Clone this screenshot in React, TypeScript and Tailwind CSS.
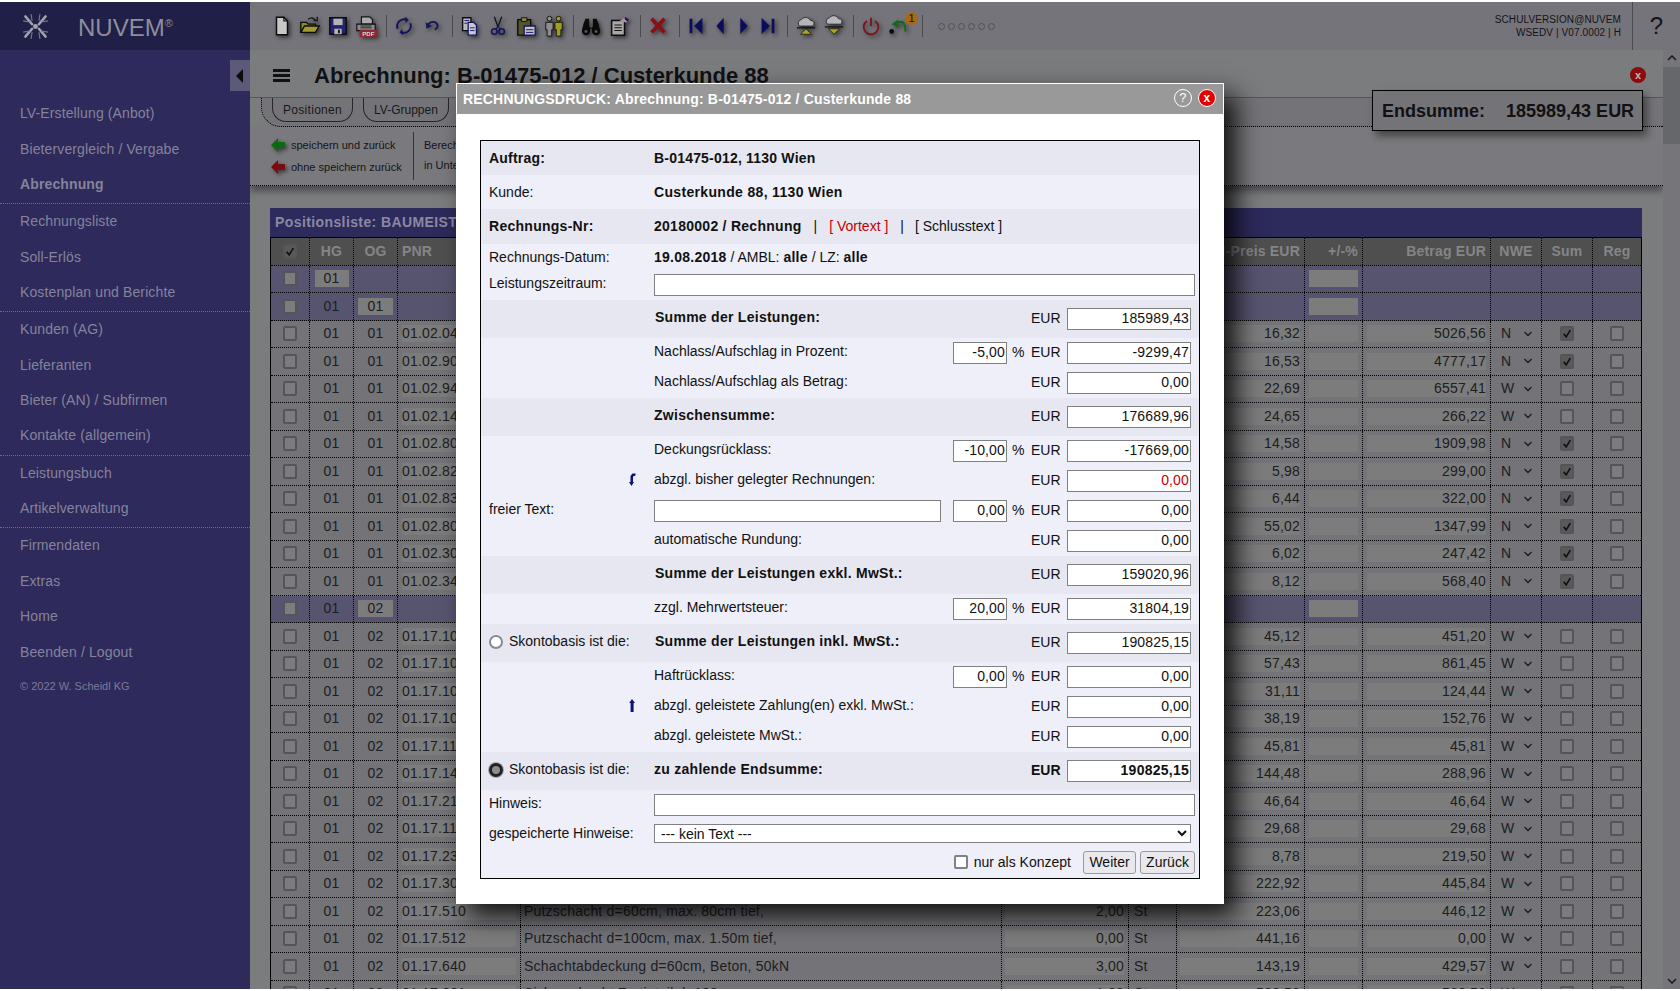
import { ReactNode } from 'react';

const FONT = "font-['Liberation_Sans',Arial,sans-serif]";
const GRID =
  'grid grid-cols-[39px_44px_44px_123px_481px_127px_48px_128px_58px_128px_51px_51px_48px]';
const SHADOW = 'drop-shadow-[2px_2px_2px_rgba(0,0,0,0.55)]';

const NAV = [
  { label: 'LV-Erstellung (Anbot)' },
  { label: 'Bietervergleich / Vergabe' },
  { label: 'Abrechnung', bold: true, line: true },
  { label: 'Rechnungsliste' },
  { label: 'Soll-Erlös' },
  { label: 'Kostenplan und Berichte', line: true },
  { label: 'Kunden (AG)' },
  { label: 'Lieferanten' },
  { label: 'Bieter (AN) / Subfirmen' },
  { label: 'Kontakte (allgemein)', line: true },
  { label: 'Leistungsbuch' },
  { label: 'Artikelverwaltung', line: true },
  { label: 'Firmendaten' },
  { label: 'Extras' },
  { label: 'Home' },
  { label: 'Beenden / Logout' },
];

type Row = {
  blue?: boolean;
  hg?: boolean;
  og?: string;
  ogField?: boolean;
  pnr?: string;
  text?: string;
  menge?: string;
  preis?: string;
  betrag?: string;
  nwe?: string;
  sum?: boolean;
};

const ROWS: Row[] = [
  { blue: true, hg: true },
  { blue: true, og: '01', ogField: true },
  { og: '01', pnr: '01.02.040', preis: '16,32', betrag: '5026,56', nwe: 'N', sum: true },
  { og: '01', pnr: '01.02.900', preis: '16,53', betrag: '4777,17', nwe: 'N', sum: true },
  { og: '01', pnr: '01.02.940', preis: '22,69', betrag: '6557,41', nwe: 'W' },
  { og: '01', pnr: '01.02.140', preis: '24,65', betrag: '266,22', nwe: 'W' },
  { og: '01', pnr: '01.02.800', preis: '14,58', betrag: '1909,98', nwe: 'N', sum: true },
  { og: '01', pnr: '01.02.820', preis: '5,98', betrag: '299,00', nwe: 'N', sum: true },
  { og: '01', pnr: '01.02.830', preis: '6,44', betrag: '322,00', nwe: 'N', sum: true },
  { og: '01', pnr: '01.02.800', preis: '55,02', betrag: '1347,99', nwe: 'N', sum: true },
  { og: '01', pnr: '01.02.300', preis: '6,02', betrag: '247,42', nwe: 'N', sum: true },
  { og: '01', pnr: '01.02.340', preis: '8,12', betrag: '568,40', nwe: 'N', sum: true },
  { blue: true, og: '02', ogField: true },
  { og: '02', pnr: '01.17.100', preis: '45,12', betrag: '451,20', nwe: 'W' },
  { og: '02', pnr: '01.17.100', preis: '57,43', betrag: '861,45', nwe: 'W' },
  { og: '02', pnr: '01.17.100', preis: '31,11', betrag: '124,44', nwe: 'W' },
  { og: '02', pnr: '01.17.100', preis: '38,19', betrag: '152,76', nwe: 'W' },
  { og: '02', pnr: '01.17.110', preis: '45,81', betrag: '45,81', nwe: 'W' },
  { og: '02', pnr: '01.17.140', preis: '144,48', betrag: '288,96', nwe: 'W' },
  { og: '02', pnr: '01.17.210', preis: '46,64', betrag: '46,64', nwe: 'W' },
  { og: '02', pnr: '01.17.110', preis: '29,68', betrag: '29,68', nwe: 'W' },
  { og: '02', pnr: '01.17.230', preis: '8,78', betrag: '219,50', nwe: 'W' },
  { og: '02', pnr: '01.17.300', preis: '222,92', betrag: '445,84', nwe: 'W' },
  { og: '02', pnr: '01.17.510', text: 'Putzschacht d=60cm, max. 80cm tief,', menge: '2,00', preis: '223,06', betrag: '446,12', nwe: 'W' },
  { og: '02', pnr: '01.17.512', text: 'Putzschacht d=100cm, max. 1.50m tief,', menge: '0,00', preis: '441,16', betrag: '0,00', nwe: 'W' },
  { og: '02', pnr: '01.17.640', text: 'Schachtabdeckung d=60cm, Beton, 50kN', menge: '3,00', preis: '143,19', betrag: '429,57', nwe: 'W' },
  { og: '02', pnr: '01.17.661', text: 'Sickerschacht Fertigteil d=100', menge: '1,00', preis: '566,56', betrag: '566,56', nwe: 'W' },
];

function Box({ checked, dark }: { checked?: boolean; dark?: boolean }) {
  return (
    <span
      className={`flex h-[15px] w-[14px] items-center justify-center rounded-[2px] border-2 border-[#555559] ${
        dark ? 'bg-[#5a5a5a]' : 'bg-[#7c7c7e]'
      }`}
    >
      {checked && (
        <svg viewBox="0 0 12 12" className="h-[11px] w-[11px]">
          <path d="M2 6.5l3 3.5 5-8" fill="none" stroke="#111" strokeWidth="2" />
        </svg>
      )}
    </span>
  );
}

function Cell({ children, className = '' }: { children?: ReactNode; className?: string }) {
  return (
    <div className={`flex items-center border-r border-dotted border-black last:border-r-0 ${className}`}>
      {children}
    </div>
  );
}

function Field({ children, className = '' }: { children?: ReactNode; className?: string }) {
  return <span className={`flex h-[17px] items-center bg-[#7c7c7c] ${className}`}>{children}</span>;
}

function TableRow({ row }: { row: Row }) {
  return (
    <div
      className={`${GRID} h-[27.5px] border-b border-dotted border-black text-[14px] tracking-[0.2px] text-[#1d1d22] ${
        row.blue ? 'bg-[#575470]' : 'bg-[#737378]'
      }`}
    >
      <Cell className="justify-center">
        <Box />
      </Cell>
      <Cell className="justify-center">
        {row.hg ? <Field className="w-[34px] justify-center">01</Field> : '01'}
      </Cell>
      <Cell className="justify-center">
        {row.ogField ? <Field className="w-[35px] justify-center">{row.og}</Field> : row.og}
      </Cell>
      <Cell className="pl-[4px]">
        {row.pnr && <Field className="w-[114px]">{row.pnr}</Field>}
      </Cell>
      <Cell className="pl-[3px]">{row.text}</Cell>
      <Cell className="justify-end pr-[4px]">
        {row.menge && <Field className="w-[119px] justify-end">{row.menge}</Field>}
      </Cell>
      <Cell className="pl-[5px]">{row.text && 'St'}</Cell>
      <Cell className="justify-end pr-[4px]">
        {row.preis && <Field className="w-[120px] justify-end">{row.preis}</Field>}
      </Cell>
      <Cell className="justify-center">
        <Field className="w-[49px]" />
      </Cell>
      <Cell className="justify-end pr-[4px]">
        {row.betrag && <Field className="w-[119px] justify-end">{row.betrag}</Field>}
      </Cell>
      <Cell className="pl-[10px]">
        {row.nwe && (
          <>
            <span className="w-[22px]">{row.nwe}</span>
            <svg viewBox="0 0 10 6" className="h-[6px] w-[10px]">
              <path d="M1.5 1l3.5 3.5L8.5 1" fill="none" stroke="#1d1d22" strokeWidth="1.4" />
            </svg>
          </>
        )}
      </Cell>
      <Cell className="justify-center">{!row.blue && <Box checked={row.sum} dark={row.sum} />}</Cell>
      <Cell className="justify-center">{!row.blue && <Box />}</Cell>
    </div>
  );
}

function ToolIcon({ children, w = 'w-7' }: { children: ReactNode; w?: string }) {
  return (
    <span className={`flex h-6 items-center justify-center ${w}`}>
      <svg viewBox="0 0 24 24" className={`h-[22px] w-[22px] ${SHADOW}`}>
        {children}
      </svg>
    </span>
  );
}

function Sep({ className = 'ml-[6px] mr-[3px]' }: { className?: string }) {
  return <span className={`h-[22px] w-px bg-[#4a4a4e] ${className}`} />;
}

function Toolbar() {
  return (
    <div className="flex items-center pl-[18px]">
      <ToolIcon>
        <path d="M6 2.5h8l4 4v15H6z" fill="#c8c8c8" stroke="#0c0c0c" strokeWidth="1.6" />
        <path d="M14 2.5v4h4" fill="none" stroke="#0c0c0c" strokeWidth="1.2" />
      </ToolIcon>
      <ToolIcon>
        <path d="M2 8h6l2 2h8v9H2z" fill="#8d8a2a" stroke="#0c0c0c" strokeWidth="1.5" />
        <path d="M2 19l4-7h16l-4 7z" fill="#a09c30" stroke="#0c0c0c" strokeWidth="1.5" />
        <path d="M10 5c3-3 6-2 8 1" fill="none" stroke="#1a1a1a" strokeWidth="1.5" />
        <path d="M16 6h4V2" fill="none" stroke="#1a1a1a" strokeWidth="1.4" />
      </ToolIcon>
      <ToolIcon>
        <path d="M3 3h18v18H3z" fill="#24246e" stroke="#0c0c0c" strokeWidth="1.5" />
        <path d="M7 4h10v7H7z" fill="#b4b4b8" />
        <path d="M8 15h8v6H8z" fill="#b4b4b8" />
        <path d="M12 16h2v4h-2z" fill="#111" />
      </ToolIcon>
      <ToolIcon>
        <path d="M7 2h9l3 3v5H7z" fill="#aaa" stroke="#111" strokeWidth="1.2" />
        <path d="M2 10h20v7H2z" fill="#8a8a8a" stroke="#111" strokeWidth="1.2" />
        <path d="M6 12h12M6 14h12" stroke="#222" strokeWidth="1" />
        <path d="M5 16h19v8H5z" fill="#8b2a36" />
        <text x="14.5" y="22.7" textAnchor="middle" fontSize="6.6" fontWeight="700" fill="#d8d8d8" fontFamily="Liberation Sans">
          PDF
        </text>
      </ToolIcon>
      <Sep />
      <ToolIcon>
        <path d="M5 15C3 9 8 3 15 5" fill="none" stroke="#14145e" strokeWidth="2.2" />
        <path d="M19 9c2 6-3 12-10 10" fill="none" stroke="#14145e" strokeWidth="2.2" />
        <path d="M13 2l4 3-3 4zM11 22l-4-3 3-4z" fill="#14145e" />
      </ToolIcon>
      <ToolIcon>
        <path d="M8 10c3-4 9-3 10 1 .5 2-1 4-3 5" fill="none" stroke="#14145e" strokeWidth="2" />
        <path d="M5 8l1 7 6-3z" fill="#14145e" />
      </ToolIcon>
      <Sep />
      <ToolIcon>
        <path d="M4 3h9v14H4z" fill="#b8b8c0" stroke="#0c0c0c" strokeWidth="1.4" />
        <path d="M10 8h6l3 3v11h-9z" fill="#c8c8d4" stroke="#14145e" strokeWidth="1.4" />
        <path d="M6 6h5M6 9h3M12 14h5M12 17h5" stroke="#14145e" strokeWidth="1" />
      </ToolIcon>
      <ToolIcon>
        <path d="M8 2l4 11M16 2l-4 11" stroke="#101020" strokeWidth="1.4" />
        <circle cx="8" cy="18" r="3" fill="none" stroke="#14145e" strokeWidth="1.8" />
        <circle cx="16" cy="18" r="3" fill="none" stroke="#14145e" strokeWidth="1.8" />
        <path d="M9.5 15.5l2.5-3 2.5 3" fill="none" stroke="#14145e" strokeWidth="1.2" />
      </ToolIcon>
      <ToolIcon>
        <path d="M3 5h14v17H3z" fill="#55552a" stroke="#0c0c0c" strokeWidth="1.5" />
        <path d="M7 3h6v4H7z" fill="#8a8a50" stroke="#0c0c0c" strokeWidth="1" />
        <path d="M10 12h12v10H10z" fill="#c0c0cc" stroke="#14145e" strokeWidth="1.4" />
        <path d="M12 16h8M12 19h8" stroke="#14145e" strokeWidth="1" />
      </ToolIcon>
      <ToolIcon>
        <circle cx="7" cy="4" r="2.6" fill="#8e8e90" stroke="#111" />
        <path d="M3 8h8v8H9.5v7h-5v-7H3z" fill="#8e8e90" stroke="#111" />
        <circle cx="17" cy="4" r="2.6" fill="#a09c20" stroke="#111" />
        <path d="M13 8h8v8h-1.5v7h-5v-7H13z" fill="#a09c20" stroke="#111" />
      </ToolIcon>
      <Sep className="ml-[5px] mr-[3px]" />
      <ToolIcon>
        <path d="M4 9l2-5h4v8l1 2h2l1-2V4h4l2 5 2 8a4.5 4.5 0 0 1-9 1v-3h-2v3a4.5 4.5 0 0 1-9-1z" fill="#0a0a0a" />
        <circle cx="6.5" cy="18" r="1.6" fill="#555" />
        <circle cx="17.5" cy="18" r="1.6" fill="#555" />
      </ToolIcon>
      <ToolIcon>
        <path d="M4 6h14v16H4z" fill="#a8a8a8" stroke="#0c0c0c" strokeWidth="1.6" />
        <path d="M7 11h8M7 14h8M7 17h8" stroke="#111" strokeWidth="1.1" />
        <path d="M11 8l5-4 4-2 3 3-3 3h-6z" fill="#b58a94" />
        <path d="M19 2l4 3-2 2-3-3z" fill="#14145e" />
      </ToolIcon>
      <Sep className="ml-[7px] mr-[3px]" />
      <ToolIcon>
        <path d="M5 4l14 15M19 4L5 19" stroke="#8a0f16" strokeWidth="4" />
      </ToolIcon>
      <Sep className="ml-[7px] mr-[4px]" />
      <ToolIcon w="w-6">
        <path d="M5 4h3v16H5zM19 3v18L10 12z" fill="#0c0c5c" />
      </ToolIcon>
      <ToolIcon w="w-6">
        <path d="M16 3v18L8 12z" fill="#0c0c5c" />
      </ToolIcon>
      <ToolIcon w="w-6">
        <path d="M8 3v18l8-9z" fill="#0c0c5c" />
      </ToolIcon>
      <ToolIcon w="w-6">
        <path d="M5 3v18l9-9zM16 4h3v16h-3z" fill="#0c0c5c" />
      </ToolIcon>
      <Sep className="ml-[7px] mr-[4px]" />
      <ToolIcon>
        <path d="M5 12a4 4 0 0 1 2-7 6 6 0 0 1 10 1 3.2 3.2 0 0 1 2 6z" fill="#b6b6b8" stroke="#222" strokeWidth="0.9" />
        <path d="M2 14h20" stroke="#111" strokeWidth="1.4" />
        <path d="M12 15l6 6H6z" fill="#a8a620" stroke="#111" strokeWidth="0.8" />
      </ToolIcon>
      <ToolIcon>
        <path d="M5 10a4 4 0 0 1 2-7 6 6 0 0 1 10 1 3.2 3.2 0 0 1 2 6z" fill="#b6b6b8" stroke="#222" strokeWidth="0.9" />
        <path d="M2 13h20" stroke="#111" strokeWidth="1.4" />
        <path d="M12 21l-6-6h12z" fill="#a8a620" stroke="#111" strokeWidth="0.8" />
      </ToolIcon>
      <Sep className="ml-[5px] mr-[3px]" />
      <ToolIcon>
        <path d="M7.5 6.5a8 8 0 1 0 9 0" fill="none" stroke="#7e1218" strokeWidth="2" />
        <path d="M12 3v9" stroke="#7e1218" strokeWidth="2" />
      </ToolIcon>
      <span className="relative flex w-7 justify-center">
        <svg viewBox="0 0 24 24" className={`h-[22px] w-[22px] ${SHADOW}`}>
          <circle cx="4" cy="18" r="2.6" fill="#0a0a0a" />
          <path d="M9 9c6-4 10-1 10 9" fill="none" stroke="#0f6a18" strokeWidth="2.2" />
          <path d="M4 10l7-5 0 9z" fill="#0f6a18" />
        </svg>
        <span className="absolute right-[-5px] top-[-3px] flex h-[13px] w-[13px] items-center justify-center rounded-full bg-[#a86a10] text-[11px] text-[#111]">
          1
        </span>
      </span>
      <Sep className="ml-[9px] mr-[15px]" />
      <span className="flex gap-[3px]">
        {[0, 1, 2, 3, 4, 5].map((i) => (
          <span key={i} className="h-[7px] w-[7px] rounded-full border border-[#505054]" />
        ))}
      </span>
    </div>
  );
}

function LogoMark() {
  return (
    <svg viewBox="0 0 24 24" className="h-[27px] w-[27px]">
      <g stroke="#a4a4ac" strokeWidth="2.2" strokeLinecap="round">
        <path d="M3 3l6 7M21 3l-6 7M3 21l6-7M21 21l-6-7" />
      </g>
      <path d="M1 7l6 1M8 1l1 6M23 7l-6 1M16 1l-1 6M1 17l6-1M8 23l1-6M23 17l-6-1M16 23l-1-6" stroke="#7a7a86" strokeWidth="1" />
      <circle cx="12" cy="12" r="2.2" fill="#a4a4ac" />
    </svg>
  );
}

function Sidebar() {
  return (
    <aside className="flex w-[250px] shrink-0 flex-col bg-[#2e2a5c]">
      <div className="flex h-[48px] items-center bg-[#1f1f47] pl-[22px]">
        <LogoMark />
        <span className="ml-[29px] flex items-start pt-[3px] text-[24px] leading-none text-[#8e8e9c]">
          NUVEM<span className="mt-[2px] text-[11px] leading-none">®</span>
        </span>
      </div>
      <div className="flex h-[45px] justify-end pt-[10px]">
        <button className="flex h-[31px] w-[20px] items-center justify-center bg-[#5c5a78]">
          <svg viewBox="0 0 8 14" className="h-[14px] w-[8px]">
            <path d="M7 0v14L0 7z" fill="#0c0c0c" />
          </svg>
        </button>
      </div>
      <nav className="pt-[1px] text-[14px] tracking-[0.12px] text-[#85839b]">
        {NAV.map((item) => (
          <div
            key={item.label}
            className={`flex items-center pl-[20px] ${
              item.line ? 'h-[37px] border-b border-dotted border-[#6f6d88] pb-[2px]' : 'h-[35.5px]'
            } ${item.bold ? 'font-bold' : ''}`}
          >
            {item.label}
          </div>
        ))}
        <div className="pl-[20px] pt-[8px] text-[11px] tracking-normal text-[#7d7b94]">© 2022 W. Scheidl KG</div>
      </nav>
    </aside>
  );
}

function Tab({ label, className = 'tracking-[0.3px]' }: { label: string; className?: string }) {
  return (
    <span className={`flex h-[24px] items-center rounded-b-[14px] border border-t-0 border-[#26262a] px-[10px] text-[12px] text-[#18181c] ${className}`}>
      {label}
    </span>
  );
}

function Arrow({ color }: { color: string }) {
  return (
    <svg viewBox="0 0 14 16" className={`h-[16px] w-[14px] ${SHADOW}`}>
      <path d="M0 8l7-7v4h7v6H7v4z" fill={color} />
    </svg>
  );
}

function Scrollbar() {
  return (
    <div className="flex w-[17px] shrink-0 flex-col items-center bg-[#76767a]">
      <svg viewBox="0 0 10 6" className="mt-[5px] h-[6px] w-[10px] shrink-0">
        <path d="M1 5l4-4 4 4" fill="none" stroke="#1c1c1c" strokeWidth="1.6" />
      </svg>
      <div className="mt-[6px] h-[77px] w-full bg-[#66676a]" />
      <div className="flex-1" />
      <svg viewBox="0 0 10 6" className="mb-[5px] h-[6px] w-[10px] shrink-0">
        <path d="M1 1l4 4 4-4" fill="none" stroke="#1c1c1c" strokeWidth="1.6" />
      </svg>
    </div>
  );
}

function Page() {
  return (
    <div className="flex min-w-0 flex-1 flex-col">
      <header className="flex h-[48px] shrink-0 items-center justify-between bg-[#74747a]">
        <Toolbar />
        <div className="flex h-full items-center">
          <div className="pr-[11px] text-right text-[10px] leading-[13px] tracking-[0.1px] text-[#141418]">
            <div>SCHULVERSION@NUVEM</div>
            <div>WSEDV | V07.0002 | H</div>
          </div>
          <div className="flex h-full w-[48px] items-center justify-center border-l border-[#4c4c50] text-[24px] text-[#141418]">
            ?
          </div>
        </div>
      </header>
      <div className="flex min-h-0 flex-1">
        <div className="min-w-0 flex-1 overflow-hidden bg-[#7b7c7e]">
          <div className="flex h-[48px] items-center justify-between border-b border-[#55565a] pt-[3px] pl-[23px] pr-[17px]">
            <div className="flex items-center">
              <span className="flex w-[17px] flex-col gap-[2px]">
                <span className="h-[3px] bg-[#111]" />
                <span className="h-[3px] bg-[#111]" />
                <span className="h-[3px] bg-[#111]" />
              </span>
              <h1 className="ml-[24px] text-[22px] font-bold text-[#111114]">
                Abrechnung: B-01475-012 / Custerkunde 88
              </h1>
            </div>
            <span className="flex h-[16px] w-[16px] items-center justify-center rounded-full bg-[#8a0c0c] text-[11px] font-bold text-[#c4b4b4]">
              x
            </span>
          </div>
          <div className="ml-[11px] flex h-[29px] gap-[10px] rounded-bl-[20px] border-b border-l border-dotted border-black bg-[#747478] pl-[10px]">
            <Tab label="Positionen" />
            <Tab label="LV-Gruppen" className="tracking-normal" />
          </div>
          <div className="flex h-[59px] border-b border-dotted border-black bg-[#7a7a7e] pl-[21px] text-[11px] text-[#141418] shadow-[0_5px_7px_rgba(0,0,0,0.4)]">
            <div className="flex w-[142px] flex-col gap-[5px] pt-[10px]">
              <div className="flex items-center gap-[6px]">
                <Arrow color="#0b6a10" />
                speichern und zurück
              </div>
              <div className="flex items-center gap-[6px]">
                <Arrow color="#7c0a0e" />
                ohne speichern zurück
              </div>
            </div>
            <div className="my-[5px] border-l border-[#333337] pl-[10px]">
              <div className="flex h-[22px] items-center pt-[4px]">Berechnung</div>
              <div className="flex h-[22px] items-center">in Unterpositionen</div>
            </div>
          </div>
          <div className="pl-[20px] pt-[22px] pr-[21px]">
            <div className="flex h-[29px] items-center bg-[#2d2a5c] pl-[5px] text-[14px] font-bold tracking-[0.4px] text-[#8a88a2]">
              Positionsliste: BAUMEISTERARBEITEN
            </div>
            <div className="border-x border-t border-black">
              <div className={`${GRID} h-[27.5px] border-b border-dotted border-black bg-[#4f4f4f] text-[14px] font-bold tracking-[0.2px] text-[#858587]`}>
                <Cell className="justify-center">
                  <Box checked dark />
                </Cell>
                <Cell className="justify-center">HG</Cell>
                <Cell className="justify-center">OG</Cell>
                <Cell className="pl-[4px]">PNR</Cell>
                <Cell />
                <Cell />
                <Cell />
                <Cell className="justify-end pr-[4px]">EH-Preis EUR</Cell>
                <Cell className="justify-end pr-[4px]">+/-%</Cell>
                <Cell className="justify-end pr-[4px]">Betrag EUR</Cell>
                <Cell className="justify-center">NWE</Cell>
                <Cell className="justify-center">Sum</Cell>
                <Cell className="justify-center">Reg</Cell>
              </div>
              {ROWS.map((row, i) => (
                <TableRow key={i} row={row} />
              ))}
            </div>
          </div>
        </div>
        <Scrollbar />
      </div>
    </div>
  );
}

function TextInput({ className = '', value = '', bold, red }: { className?: string; value?: string; bold?: boolean; red?: boolean }) {
  return (
    <input
      readOnly
      value={value}
      className={`h-[22px] border border-[#808080] bg-white px-[1px] pb-[2px] text-right text-[14px] tracking-[0.15px] outline-none ${
        bold ? 'font-bold tracking-[0.25px]' : ''
      } ${red ? 'text-[#d00000]' : 'text-[#111]'} ${className}`}
    />
  );
}

type FormRowProps = {
  h: string;
  shade?: boolean;
  left?: ReactNode;
  label?: ReactNode;
  pct?: string;
  amount?: string;
  bold?: boolean;
  red?: boolean;
  strong?: boolean;
};

function FormRow({ h, shade, left, label, pct, amount, bold, red, strong }: FormRowProps) {
  return (
    <div className={`flex items-center pl-2 pr-2 ${h} ${shade ? 'bg-[#e6e7f0]' : ''}`}>
      <div className="w-[165px] shrink-0 pb-[3px]">{left}</div>
      <div className={`min-w-0 flex-1 pb-[3px] ${bold ? 'font-bold tracking-[0.27px]' : ''}`}>{label}</div>
      <div className="flex w-[78px] items-center">
        {pct && (
          <>
            <TextInput value={pct} className="w-[54px]" />
            <span className="ml-[5px] pb-[2px]">%</span>
          </>
        )}
      </div>
      <div className={`w-[36px] pb-[2px] ${strong ? 'font-bold' : ''}`}>EUR</div>
      <TextInput value={amount} className="w-[124px]" bold={strong} red={red} />
    </div>
  );
}

function SumLabel({ children }: { children: ReactNode }) {
  return <span className="pl-[1px]">{children}</span>;
}

function Radio({ checked }: { checked?: boolean }) {
  return (
    <span className="flex items-center gap-[6px]">
      {checked ? (
        <span className="h-[14px] w-[14px] rounded-full border-[3px] border-[#222] bg-[#8c8c8c] shadow-[0_0_0_1px_#aaa]" />
      ) : (
        <span className="h-[14px] w-[14px] rounded-full border-2 border-[#8a8a92] bg-white" />
      )}
      Skontobasis ist die:
    </span>
  );
}

function Marker({ up }: { up?: boolean }) {
  return (
    <span className="flex justify-end pr-[18px]">
      <svg viewBox="0 0 8 13" className="h-[13px] w-[8px]">
        {up ? (
          <path d="M4 0L1.2 4H2.6V13H5.6V4H7z" fill="#10107a" />
        ) : (
          <path d="M7.5 0.5H4.5L2.5 3V9H1L3.5 13 6 9H5V3.4L7.5 2.5z" fill="#10107a" />
        )}
      </svg>
    </span>
  );
}

function Modal() {
  return (
    <div className="absolute left-[456px] top-[83px] h-[821px] w-[768px] border border-white bg-white text-[14px] text-[#111] shadow-[12px_12px_24px_rgba(0,0,0,0.85)]">
      <div className="flex h-[30px] items-center justify-between bg-[#999999] pl-[6px] pr-[7px] text-[14px] font-bold tracking-[0.18px] text-white">
        RECHNUNGSDRUCK: Abrechnung: B-01475-012 / Custerkunde 88
        <div className="mb-[2px] flex items-center gap-[6px]">
          <span className="flex h-[18px] w-[18px] items-center justify-center rounded-full border border-white text-[13px] font-normal">
            ?
          </span>
          <span className="flex h-[18px] w-[18px] items-center justify-center rounded-full border border-white bg-[#e60000] text-[12px]">
            x
          </span>
        </div>
      </div>
      <div className="ml-[23px] mt-[26px] h-[739px] w-[720px] border border-black bg-[#eeeff8]">
        <div className="flex h-[34px] items-center bg-[#e6e7f0] pl-2">
          <div className="w-[165px] font-bold tracking-[0.2px]">Auftrag:</div>
          <div className="font-bold tracking-[0.2px]">B-01475-012, 1130 Wien</div>
        </div>
        <div className="flex h-[34px] items-center pl-2">
          <div className="w-[165px]">Kunde:</div>
          <div className="font-bold tracking-[0.33px]">Custerkunde 88, 1130 Wien</div>
        </div>
        <div className="flex h-[35px] items-center bg-[#e6e7f0] pl-2">
          <div className="w-[165px] font-bold tracking-[0.27px]">Rechnungs-Nr:</div>
          <div className="font-bold tracking-[0.27px]">20180002 / Rechnung</div>
          <span className="ml-[12px]">|</span>
          <span className="ml-[12px] text-[#c00000]">[ Vortext ]</span>
          <span className="ml-[12px]">|</span>
          <span className="ml-[11px]">[ Schlusstext ]</span>
        </div>
        <div className="flex h-[26px] items-center pl-2">
          <div className="w-[165px]">Rechnungs-Datum:</div>
          <div>
            <b className="tracking-[0.25px]">19.08.2018</b> / AMBL: <b className="tracking-[0.25px]">alle</b> / LZ:{' '}
            <b className="tracking-[0.25px]">alle</b>
          </div>
        </div>
        <div className="flex h-[30px] items-center pl-2">
          <div className="w-[165px] pb-[3px]">Leistungszeitraum:</div>
          <TextInput className="w-[541px]" />
        </div>
        <FormRow h="h-[38px]" shade label={<SumLabel>Summe der Leistungen:</SumLabel>} bold amount="185989,43" />
        <FormRow h="h-[30px]" label="Nachlass/Aufschlag in Prozent:" pct="-5,00" amount="-9299,47" />
        <FormRow h="h-[30px]" label="Nachlass/Aufschlag als Betrag:" amount="0,00" />
        <FormRow h="h-[38px]" shade label="Zwischensumme:" bold amount="176689,96" />
        <FormRow h="h-[30px]" label="Deckungsrücklass:" pct="-10,00" amount="-17669,00" />
        <FormRow h="h-[30px]" left={<Marker />} label="abzgl. bisher gelegter Rechnungen:" amount="0,00" red />
        <div className="flex h-[30px] items-center pl-2 pr-2">
          <div className="w-[165px] shrink-0 pb-[3px]">freier Text:</div>
          <div className="min-w-0 flex-1">
            <TextInput className="w-[287px]" />
          </div>
          <div className="flex w-[78px] items-center">
            <TextInput value="0,00" className="w-[54px]" />
            <span className="ml-[5px] pb-[2px]">%</span>
          </div>
          <div className="w-[36px] pb-[2px]">EUR</div>
          <TextInput value="0,00" className="w-[124px]" />
        </div>
        <FormRow h="h-[30px]" label="automatische Rundung:" amount="0,00" />
        <FormRow h="h-[38px]" shade label={<SumLabel>Summe der Leistungen exkl. MwSt.:</SumLabel>} bold amount="159020,96" />
        <FormRow h="h-[30px]" label="zzgl. Mehrwertsteuer:" pct="20,00" amount="31804,19" />
        <FormRow h="h-[38px]" shade left={<Radio />} label={<SumLabel>Summe der Leistungen inkl. MwSt.:</SumLabel>} bold amount="190825,15" />
        <FormRow h="h-[30px]" label="Haftrücklass:" pct="0,00" amount="0,00" />
        <FormRow h="h-[30px]" left={<Marker up />} label="abzgl. geleistete Zahlung(en) exkl. MwSt.:" amount="0,00" />
        <FormRow h="h-[30px]" label="abzgl. geleistete MwSt.:" amount="0,00" />
        <FormRow h="h-[38px]" shade left={<Radio checked />} label="zu zahlende Endsumme:" bold strong amount="190825,15" />
        <div className="flex h-[30px] items-center pl-2">
          <div className="w-[165px] pb-[3px]">Hinweis:</div>
          <TextInput className="w-[541px]" />
        </div>
        <div className="flex h-[27px] items-center pl-2">
          <div className="w-[165px]">gespeicherte Hinweise:</div>
          <select className="h-[19px] w-[537px] border border-[#808080] bg-white pl-[2px] text-[14px] leading-none">
            <option>--- kein Text ---</option>
          </select>
        </div>
        <div className="flex h-[30px] items-center justify-end pr-[4px]">
          <span className="flex h-[14px] w-[14px] rounded-[2px] border-2 border-[#808088] bg-white" />
          <span className="ml-[6px] mr-[12px]">nur als Konzept</span>
          <button className="mr-[4px] h-[23px] w-[53px] rounded-[3px] border border-[#999] bg-[#e9e9ed]">Weiter</button>
          <button className="h-[23px] w-[55px] rounded-[3px] border border-[#999] bg-[#e9e9ed]">Zurück</button>
        </div>
      </div>
    </div>
  );
}

export default function App() {
  return (
    <div className={`relative h-[991px] w-[1680px] overflow-hidden bg-white py-[2px] ${FONT}`}>
      <div className="flex h-[987px]">
        <Sidebar />
        <Page />
      </div>
      <div className="absolute left-[1372px] top-[90px] flex h-[41px] w-[271px] items-center gap-[21px] whitespace-nowrap border border-black bg-[#737378] pl-[9px] pt-[1px] text-[18px] font-bold text-[#111114] shadow-[4px_5px_8px_rgba(0,0,0,0.45)]">
        <span>Endsumme:</span>
        <span>185989,43 EUR</span>
      </div>
      <Modal />
    </div>
  );
}
